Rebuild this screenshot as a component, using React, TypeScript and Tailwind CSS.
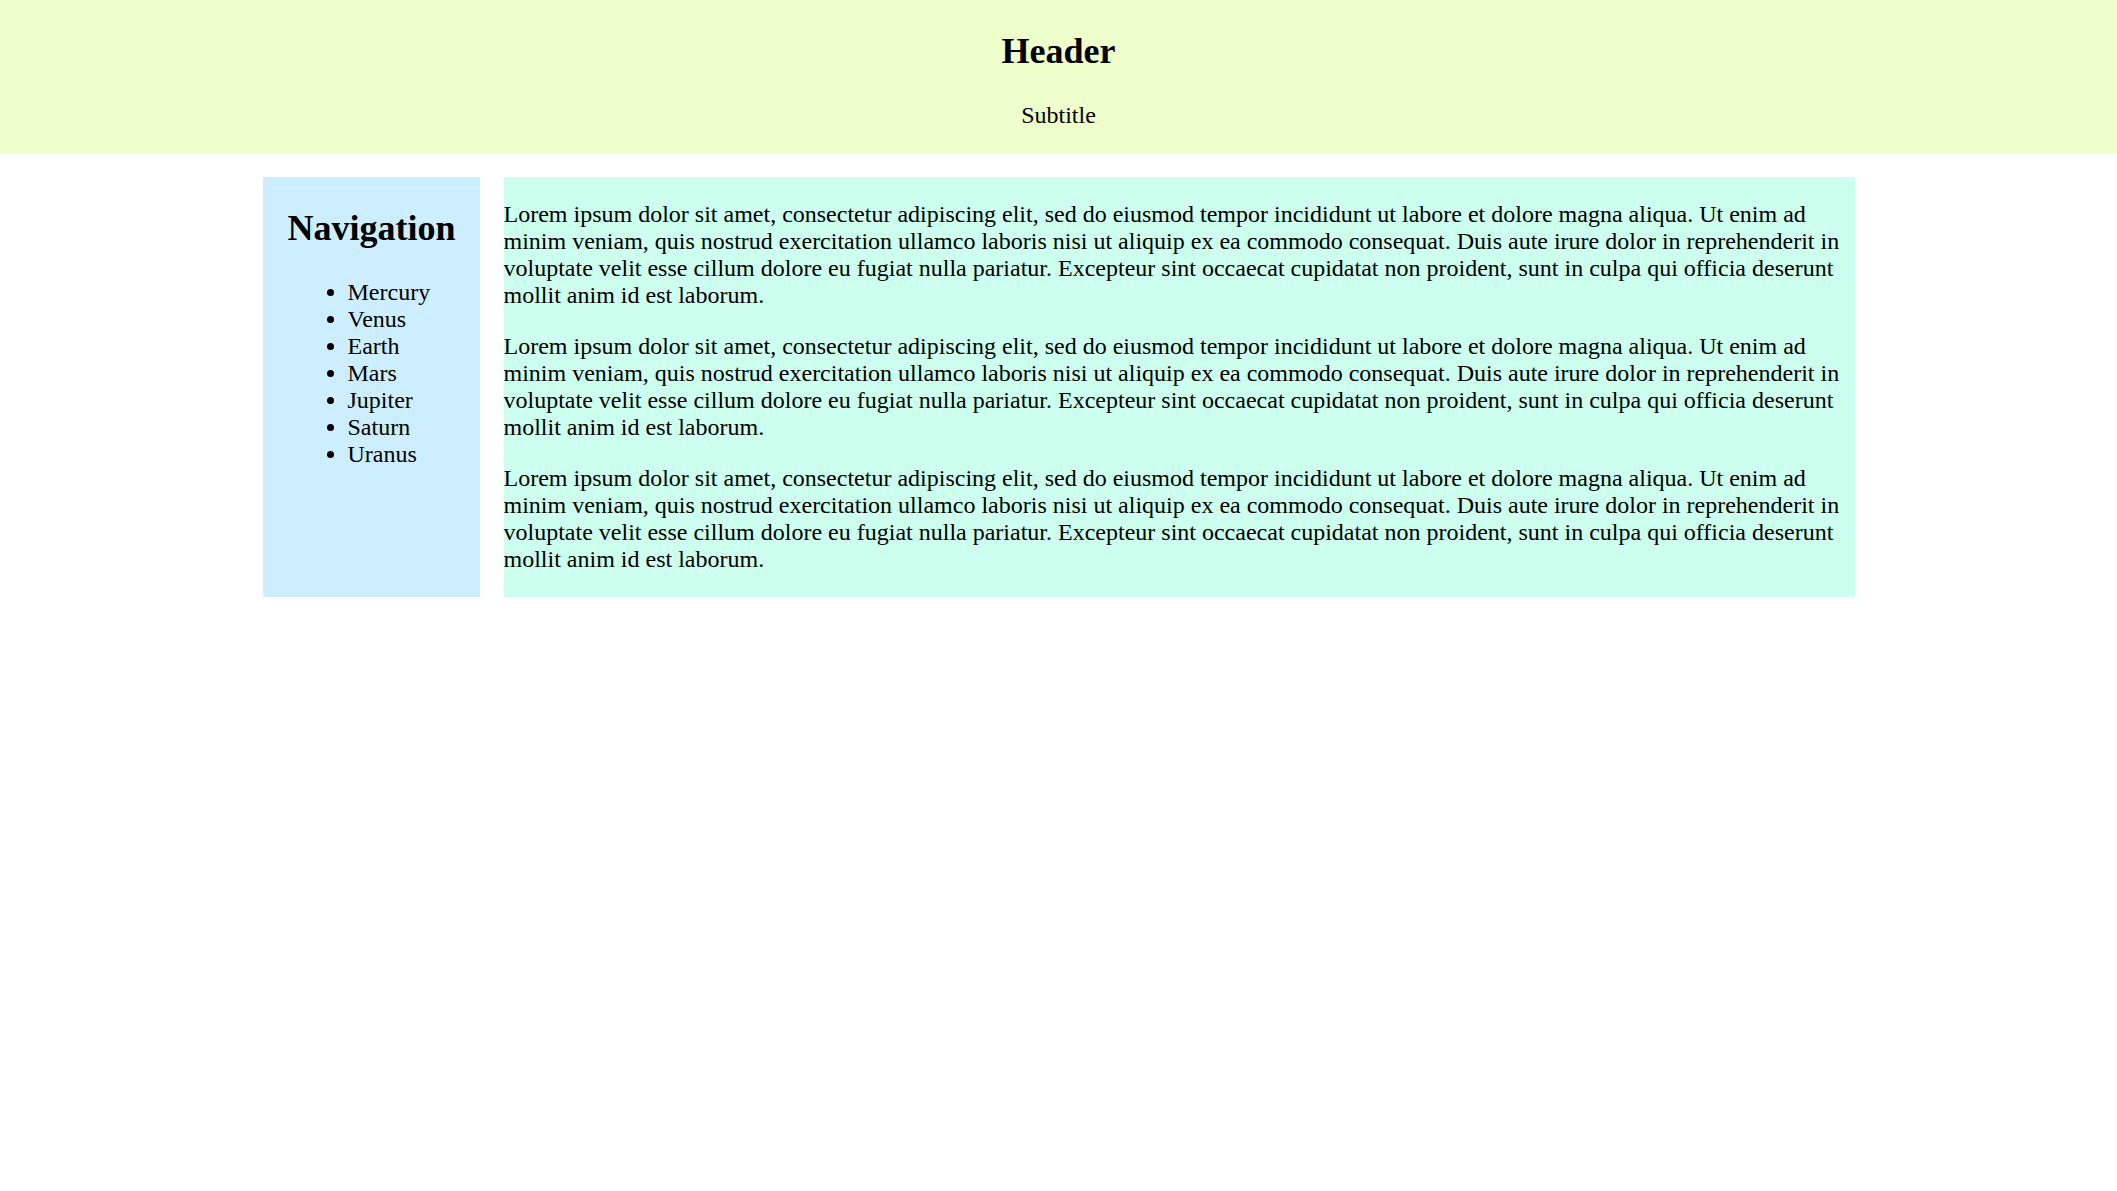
import React from "react";

const PLANETS = ["Mercury", "Venus", "Earth", "Mars", "Jupiter", "Saturn", "Uranus"];

const LOREM =
  "Lorem ipsum dolor sit amet, consectetur adipiscing elit, sed do eiusmod tempor incididunt ut labore et dolore magna aliqua. Ut enim ad minim veniam, quis nostrud exercitation ullamco laboris nisi ut aliquip ex ea commodo consequat. Duis aute irure dolor in reprehenderit in voluptate velit esse cillum dolore eu fugiat nulla pariatur. Excepteur sint occaecat cupidatat non proident, sunt in culpa qui officia deserunt mollit anim id est laborum.";

const Header: React.FC = () => (
  <header className="flex flex-col items-center bg-[#eeffcc]">
    <h1 className="mt-[31px] text-[36px] font-bold leading-[41px]">Header</h1>
    <p className="mt-[30px] mb-[24px] text-[24px] leading-[27px]">Subtitle</p>
  </header>
);

const Sidebar: React.FC = () => (
  <nav className="w-[217px] shrink-0 bg-[#cceeff] pl-[25px]">
    <h2 className="mt-[31px] text-[36px] font-bold leading-[41px]">Navigation</h2>
    <ul className="mt-[30px] mb-[24px] list-disc pl-[60px] text-[24px] leading-[27px]">
      {PLANETS.map((p) => (
        <li key={p}>{p}</li>
      ))}
    </ul>
  </nav>
);

const Content: React.FC = () => (
  <main className="flex flex-1 flex-col gap-[24px] bg-[#ccffee] py-[24px] text-[24px] leading-[27px]">
    <p>{LOREM}</p>
    <p>{LOREM}</p>
    <p>{LOREM}</p>
  </main>
);

const App: React.FC = () => (
  <div className="min-h-screen bg-white text-black font-['Liberation_Serif','Times_New_Roman',serif]">
    <Header />
    <div className="mx-auto mt-[24px] flex w-[1592px] gap-[24px]">
      <Sidebar />
      <Content />
    </div>
  </div>
);

export default App;
